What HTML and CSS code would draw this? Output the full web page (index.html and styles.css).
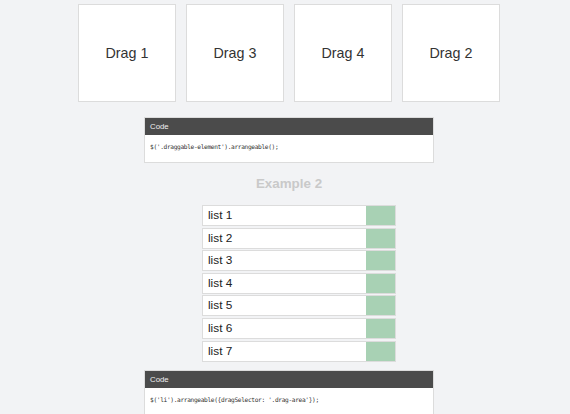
FILE: index.html
```html
<!DOCTYPE html>
<html>
<head>
<meta charset="utf-8">
<link rel="stylesheet" href="styles.css">
</head>
<body>
<div class="page">
  <div class="drag-row">
    <div class="drag-box">Drag 1</div>
    <div class="drag-box">Drag 3</div>
    <div class="drag-box">Drag 4</div>
    <div class="drag-box">Drag 2</div>
  </div>

  <div class="code-block first">
    <div class="code-head">Code</div>
    <div class="code-body">$('.draggable-element').arrangeable();</div>
  </div>

  <h2 class="example-title">Example 2</h2>

  <ul class="list">
    <li><span class="list-label">list 1</span><span class="drag-area"></span></li>
    <li><span class="list-label">list 2</span><span class="drag-area"></span></li>
    <li><span class="list-label">list 3</span><span class="drag-area"></span></li>
    <li><span class="list-label">list 4</span><span class="drag-area"></span></li>
    <li><span class="list-label">list 5</span><span class="drag-area"></span></li>
    <li><span class="list-label">list 6</span><span class="drag-area"></span></li>
    <li><span class="list-label">list 7</span><span class="drag-area"></span></li>
  </ul>

  <div class="code-block second">
    <div class="code-head">Code</div>
    <div class="code-body">$('li').arrangeable({dragSelector: '.drag-area'});</div>
  </div>
</div>
</body>
</html>
```

FILE: styles.css
```css
html, body {
  background: #f2f3f5;
}

body {
  margin: 0 0 0 8px;
  padding-top: 4px;
  font-family: "Liberation Sans", Arial, sans-serif;
  color: #333;
  overflow: hidden;
}

.page {
  display: flex;
  flex-direction: column;
  align-items: center;
}

/* draggable squares */
.drag-row {
  display: flex;
  gap: 10px;
}

.drag-box {
  box-sizing: border-box;
  width: 98px;
  height: 98px;
  background: #fff;
  border: 1px solid #dcdcdc;
  display: flex;
  align-items: center;
  justify-content: center;
  font-size: 14.3px;
  color: #333;
}

/* code snippets */
.code-block {
  box-sizing: border-box;
  width: 290px;
  background: #fff;
  border: 1px solid #dcdcdc;
}

.code-block.first {
  margin-top: 15px;
}

.code-block.second {
  margin-top: 8px;
}

.code-head {
  height: 17px;
  background: #4b4b4b;
  color: #f0f0f0;
  font-size: 7.8px;
  line-height: 17px;
  padding-left: 5px;
}

.code-body {
  height: 27px;
  box-sizing: border-box;
  padding: 8px 0 0 5px;
  font-family: "DejaVu Sans Mono", monospace;
  font-size: 6.2px;
  letter-spacing: -0.35px;
  color: #333;
}

.example-title {
  margin: 13px 0 0;
  height: 16px;
  line-height: 16px;
  font-size: 13.4px;
  font-weight: bold;
  color: #c9c9c9;
}

.list {
  list-style: none;
  margin: 13px 0 0 20px;
  padding: 0;
  display: flex;
  flex-direction: column;
  gap: 1.6px;
}

.list li {
  box-sizing: border-box;
  width: 194px;
  height: 21px;
  display: flex;
  background: #fff;
  border: 1px solid #dcdcdc;
}

.list-label {
  flex: 1;
  padding-left: 5px;
  font-size: 11.8px;
  line-height: 19px;
  color: #222;
}

.drag-area {
  width: 29px;
  background: #a8d1b4;
}
```
